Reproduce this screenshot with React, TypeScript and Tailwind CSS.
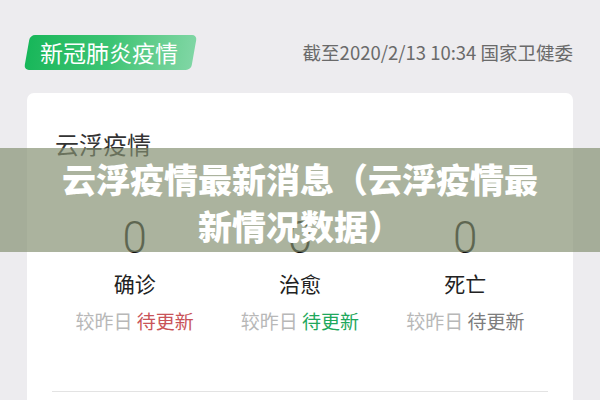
const cjk = { fontFamily: '"Noto Sans CJK SC", "Noto Sans", sans-serif' };

const stats = [
  { label: '确诊', value: 0, tone: 'text-[#c95459]' },
  { label: '治愈', value: 0, tone: 'text-[#1fa85c]' },
  { label: '死亡', value: 0, tone: 'text-[#7d7d7d]' },
];

function Tag() {
  return (
    <div className="relative h-[35px] w-[167px]">
      <div className="absolute inset-0 -skew-x-[10deg] rounded-[5px] bg-gradient-to-r from-[#17b75a] via-[#3cc474] to-[#7fd6a4]" />
      <span className="relative flex h-full items-center pl-[13px] text-[23px] leading-none text-white">
        新冠肺炎疫情
      </span>
    </div>
  );
}

export default function App() {
  return (
    <div className="relative h-[400px] w-[600px] overflow-hidden bg-[#edecef]" style={cjk}>
      <div className="px-[27px] pt-[35px]">
        <div className="flex items-center justify-between">
          <Tag />
          <span className="text-[18.5px] leading-none text-[#6a6a6a]">
            截至2020/2/13 10:34 国家卫健委
          </span>
        </div>

        <div className="mt-[23px] h-[320px] rounded-[7px] bg-white px-[25px]">
          <h3 className="pl-[3px] pt-[39px] text-[24px] leading-none text-[#333]">云浮疫情</h3>

          <div className="mt-[60px] grid grid-cols-3">
            {stats.map((s) => (
              <div key={s.label} className="flex flex-col items-center">
                <span
                  className="text-[44px] font-light leading-none text-[#111]"
                  style={{ fontFamily: 'Roboto, sans-serif' }}
                >
                  {s.value}
                </span>
                <span className="mt-[13px] text-[21px] leading-none text-[#222]">{s.label}</span>
                <span className="mt-[17px] text-[19px] leading-none">
                  <span className="text-[#b8b8b8]">较昨日 </span>
                  <span className={s.tone}>待更新</span>
                </span>
              </div>
            ))}
          </div>

          <div className="mt-[61px] h-px bg-[#e3e3e3]" />
        </div>
      </div>

      {/* headline banner across the page */}
      <div className="absolute left-0 right-0 top-[148px] flex h-[104px] flex-col items-center justify-center bg-[rgba(131,143,112,0.68)]">
        <p className="pt-[4px] text-center text-[34px] font-black leading-[47px] text-white">
          云浮疫情最新消息（云浮疫情最
          <br />
          新情况数据）
        </p>
      </div>
    </div>
  );
}
